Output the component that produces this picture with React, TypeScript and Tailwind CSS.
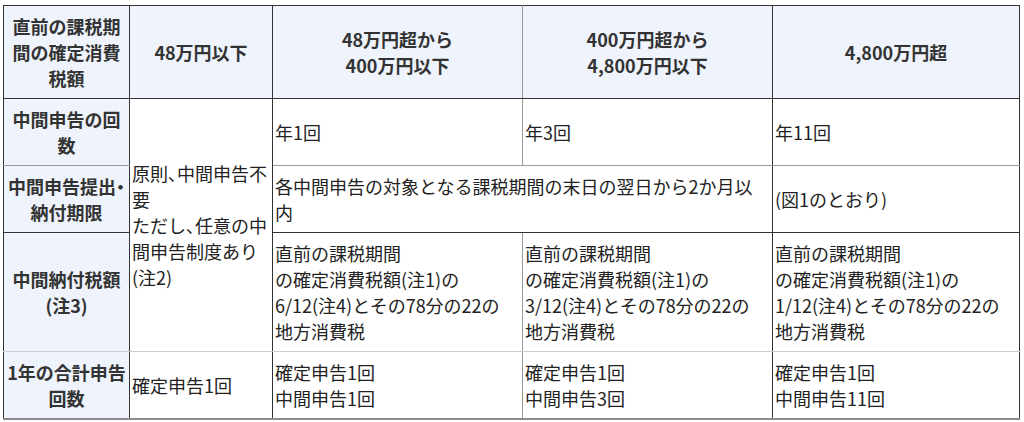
const font = { fontFamily: '"Noto Sans CJK JP", "Noto Sans", sans-serif' };

const head =
  "border border-[#333] bg-[#eef3fc] px-[2px] py-[7px] text-center align-middle font-bold text-[#333]";
const cell = "border border-[#333] px-[2px] py-[7px] text-left align-middle font-normal text-[#222]";

function Dot({ c }: { c: string }) {
  return <span className="[font-feature-settings:'palt']">{c}</span>;
}

export default function App() {
  return (
    <div className="bg-white pl-[3px] pt-[5px]" style={font}>
      <table className="w-[1016px] table-fixed border-collapse text-[18px] leading-[26px]">
        <colgroup>
          <col className="w-[126px]" />
          <col className="w-[143px]" />
          <col className="w-[250px]" />
          <col className="w-[250px]" />
          <col className="w-[247px]" />
        </colgroup>
        <thead>
          <tr>
            <th className={`${head} whitespace-nowrap`}>
              直前の課税期
              <br />
              間の確定消費
              <br />
              税額
            </th>
            <th className={head}>48万円以下</th>
            <th className={`${head} border-r-[#999]`}>
              48万円超から
              <br />
              400万円以下
            </th>
            <th className={head}>
              400万円超から
              <br />
              4,800万円以下
            </th>
            <th className={head}>4,800万円超</th>
          </tr>
        </thead>
        <tbody>
          <tr>
            <th className={`${head} whitespace-nowrap border-b-[#999]`}>
              中間申告の回
              <br />数
            </th>
            <td rowSpan={3} className={`${cell} whitespace-nowrap border-b-[#ccc]`}>
              原則<Dot c="、" />中間申告不
              <br />要
              <br />
              ただし<Dot c="、" />任意の中
              <br />
              間申告制度あり
              <br />
              (注2)
            </td>
            <td className={`${cell} border-b-[#999] border-r-[#999]`}>年1回</td>
            <td className={`${cell} border-b-[#999]`}>年3回</td>
            <td className={`${cell} border-b-[#999]`}>年11回</td>
          </tr>
          <tr>
            <th className={`${head} whitespace-nowrap`}>
              中間申告提出<Dot c="・" />
              <br />
              納付期限
            </th>
            <td colSpan={2} className={cell}>
              各中間申告の対象となる課税期間の末日の翌日から2か月以
              <br />内
            </td>
            <td className={cell}>(図1のとおり)</td>
          </tr>
          <tr>
            <th className={`${head} whitespace-nowrap border-b-[#ccc]`}>
              中間納付税額
              <br />
              (注3)
            </th>
            <td className={`${cell} border-b-[#ccc] border-r-[#999]`}>
              直前の課税期間
              <br />
              の確定消費税額(注1)の
              <br />
              6/12(注4)とその78分の22の
              <br />
              地方消費税
            </td>
            <td className={`${cell} border-b-[#ccc]`}>
              直前の課税期間
              <br />
              の確定消費税額(注1)の
              <br />
              3/12(注4)とその78分の22の
              <br />
              地方消費税
            </td>
            <td className={`${cell} border-b-[#ccc]`}>
              直前の課税期間
              <br />
              の確定消費税額(注1)の
              <br />
              1/12(注4)とその78分の22の
              <br />
              地方消費税
            </td>
          </tr>
          <tr>
            <th className={`${head} whitespace-nowrap border-b-2 border-b-[#8c8c8c]`}>
              1年の合計申告
              <br />
              回数
            </th>
            <td className={`${cell} border-b-2 border-b-[#8c8c8c]`}>確定申告1回</td>
            <td className={`${cell} border-b-2 border-b-[#8c8c8c] border-r-[#999]`}>
              確定申告1回
              <br />
              中間申告1回
            </td>
            <td className={`${cell} border-b-2 border-b-[#8c8c8c]`}>
              確定申告1回
              <br />
              中間申告3回
            </td>
            <td className={`${cell} border-b-2 border-b-[#8c8c8c]`}>
              確定申告1回
              <br />
              中間申告11回
            </td>
          </tr>
        </tbody>
      </table>
    </div>
  );
}
